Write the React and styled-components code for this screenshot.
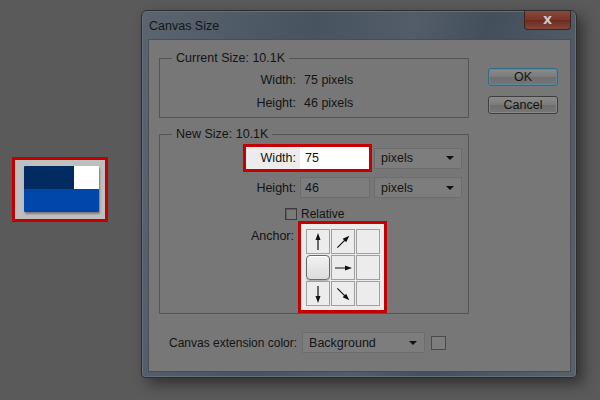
import React from 'react'
import styled, { createGlobalStyle } from 'styled-components'

const GlobalStyle = createGlobalStyle`
    html, body {
        margin: 0;
        padding: 0;
        background: #5a5a5a;
    }
    body {
        font-family: "Liberation Sans", Arial, sans-serif;
        font-size: 12px;
        line-height: 14px;
        color: #141414;
    }
`

const Page = styled.div`
    width: 600px;
    height: 400px;
    display: flex;
    align-items: flex-start;
    gap: 33px;
    padding: 10px 0 0 12px;
    box-sizing: border-box;
    overflow: hidden;
    background: #5a5a5a;
`

const Thumb = styled.div`
    margin-top: 147px;
    width: 96px;
    height: 65px;
    box-sizing: border-box;
    border: 3px solid #c40000;
    background: #bfbfbf;
    padding: 6px 0 0 9px;
`

const ThumbImage = styled.div`
    width: 75px;
    height: 46px;
    display: grid;
    grid-template-columns: 50px 25px;
    grid-template-rows: 23px 23px;
    box-shadow: 1px 2px 2px rgba(0, 0, 0, .35);
    border-radius: 1px;
    overflow: hidden;
`

const Swatch = styled.div`
    background: ${p => p.$color};
    grid-column: ${p => p.$span || 'auto'};
`

const Window = styled.div`
    width: 436px;
    height: 368px;
    box-sizing: border-box;
    border: 1px solid #2b2d30;
    border-radius: 6px 6px 4px 4px;
    background: linear-gradient(100deg, #5a6570 0%, #47535f 35%, #525d69 55%, #434f5b 70%, #58626d 100%);
    box-shadow: 6px 6px 14px rgba(0, 0, 0, .45), inset 0 0 0 1px #66707b;
    padding: 0 5px 5px 6px;
    display: flex;
    flex-direction: column;
`

const TitleBar = styled.div`
    height: 28px;
    display: flex;
    align-items: flex-start;
    justify-content: space-between;
`

const Title = styled.div`
    font-size: 12.5px;
    color: #151515;
    padding-top: 8px;
    padding-left: 1px;
`

const CloseButton = styled.div`
    width: 47px;
    height: 19px;
    box-sizing: border-box;
    border: 1px solid #3a2523;
    border-top: none;
    border-radius: 0 0 4px 4px;
    background: linear-gradient(#8a4a3f, #7a3326 50%, #6c2a1f 51%, #86463a);
    display: flex;
    align-items: center;
    justify-content: center;
    color: #c9c9c9;
    font-family: "DejaVu Sans", sans-serif;
    font-weight: bold;
    font-size: 14px;
    line-height: 1;
    padding-bottom: 2px;
`

const Client = styled.div`
    flex: 1;
    border: 1px solid #474e56;
    background: #777777;
    display: flex;
    padding: 11px 0 0 10px;
`

const LeftColumn = styled.div`
    width: 310px;
    display: flex;
    flex-direction: column;
`

const RightColumn = styled.div`
    margin-left: 19px;
    margin-top: 17px;
    width: 70px;
    display: flex;
    flex-direction: column;
    gap: 10px;
`

const Button = styled.div`
    height: 18px;
    box-sizing: border-box;
    border: 1px solid ${p => (p.$default ? '#2f6c8a' : '#3e3e3e')};
    box-shadow: ${p => (p.$default ? 'inset 0 0 0 1px #5b8aa0' : 'inset 0 0 0 1px #8a8a8a')};
    border-radius: 3px;
    background: linear-gradient(#8b8b8b, #7b7b7b 50%, #6f6f6f 51%, #767676);
    display: flex;
    align-items: center;
    justify-content: center;
    font-size: 12.5px;
`

const Group = styled.fieldset`
    margin: ${p => p.$gap || 0}px 0 0 0;
    padding: ${p => p.$pt}px 0 ${p => p.$pb}px 0;
    border: 1px solid #545454;
    min-width: 0;
`

const Legend = styled.legend`
    margin-left: 12px;
    padding: 0 4px;
    line-height: 14px;
    font-size: 12.5px;
`

const Rows = styled.div`
    display: flex;
    flex-direction: column;
    gap: ${p => p.$gap}px;
`

const Row = styled.div`
    display: flex;
    align-items: ${p => p.$align || 'center'};
    gap: 4px;
    margin-top: ${p => p.$mt || 0}px;
`

const Label = styled.div`
    width: ${p => p.$w}px;
    text-align: right;
    flex-shrink: 0;
    display: flex;
    justify-content: flex-end;
    align-items: center;
    gap: 4px;
    margin-top: ${p => p.$mt || 0}px;
    font-size: 12.5px;
`

const Value = styled.div`
    padding-left: 4px;
    font-size: 12.5px;
`

const Highlight = styled.div`
    margin-left: 83px;
    border: 3px solid #c40000;
    background: #ececec;
    display: flex;
    align-items: center;
    gap: 4px;
`

const Input = styled.div`
    width: ${p => p.$w}px;
    height: ${p => p.$h}px;
    box-sizing: border-box;
    padding-left: 4px;
    display: flex;
    align-items: center;
    background: ${p => (p.$active ? '#ffffff' : '#7d7d7d')};
    border: 1px solid ${p => (p.$active ? '#ffffff' : '#6c6c6c')};
    font-size: 12.5px;
`

const Select = styled.div`
    width: ${p => p.$w}px;
    height: 21px;
    box-sizing: border-box;
    margin-left: ${p => p.$ml || 0}px;
    border: 1px solid #6d6d6d;
    background: #7d7d7d;
    display: flex;
    align-items: center;
    justify-content: space-between;
    padding: 0 7px 0 6px;
    font-size: 12.5px;
`

const Caret = styled.span`
    width: 0;
    height: 0;
    border-left: 4px solid transparent;
    border-right: 4px solid transparent;
    border-top: 4px solid #111;
`

const Checkbox = styled.div`
    width: 12px;
    height: 12px;
    box-sizing: border-box;
    border: 1px solid #3c3c3c;
    background: #7a7a7a;
    box-shadow: inset 1px 1px 0 #5e5e5e;
`

const AnchorBox = styled.div`
    border: 3px solid #c40000;
    background: #ececec;
    padding: 5px 4px 4px 5px;
`

const AnchorGrid = styled.div`
    display: grid;
    grid-template-columns: repeat(3, 24px);
    grid-template-rows: repeat(3, 25px);
    gap: 1px;
`

const Cell = styled.div`
    box-sizing: border-box;
    border: 1px solid #a0a0a0;
    display: flex;
    align-items: center;
    justify-content: center;
    ${p => p.$selected && `
        border: 1px solid #6a6a6a;
        border-radius: 4px;
        background: linear-gradient(#f2f2f2, #dcdcdc);
        box-shadow: inset 0 1px 0 #fff, 0 1px 1px rgba(0,0,0,.25);
    `}
`

const ExtensionRow = styled.div`
    margin-top: 18px;
    padding-left: 10px;
    display: flex;
    align-items: center;
`

const ColorChip = styled.div`
    width: 15px;
    height: 14px;
    box-sizing: border-box;
    margin-left: 6px;
    border: 1px solid #4a4a4a;
    background: #7d7d7d;
`

const Arrow = ({ rotate }) => (
    <svg width="16" height="20" viewBox="0 0 16 20" style={{ transform: `rotate(${rotate}deg)` }}>
        <line x1="8" y1="18" x2="8" y2="6" stroke="#111" strokeWidth="1.2" />
        <polygon points="8,1 5.5,8 10.5,8" fill="#111" />
    </svg>
)

const anchors = [
    { rot: 0 }, { rot: 45 }, {},
    { selected: true }, { rot: 90 }, {},
    { rot: 180 }, { rot: 135 }, {},
]

export default function App() {
    return (
        <>
            <GlobalStyle />
            <Page>
                <Thumb>
                    <ThumbImage>
                        <Swatch $color="#022b62" />
                        <Swatch $color="#ffffff" />
                        <Swatch $color="#0047a9" $span="1 / span 2" />
                    </ThumbImage>
                </Thumb>

                <Window>
                    <TitleBar>
                        <Title>Canvas Size</Title>
                        <CloseButton>x</CloseButton>
                    </TitleBar>

                    <Client>
                        <LeftColumn>
                            <Group $pt={8} $pb={7}>
                                <Legend>Current Size: 10.1K</Legend>
                                <Rows $gap={9}>
                                    <Row>
                                        <Label $w={136}>Width:</Label>
                                        <Value>75 pixels</Value>
                                    </Row>
                                    <Row>
                                        <Label $w={136}>Height:</Label>
                                        <Value>46 pixels</Value>
                                    </Row>
                                </Rows>
                            </Group>

                            <Group $gap={9} $pt={3} $pb={0}>
                                <Legend>New Size: 10.1K</Legend>
                                <Rows $gap={5}>
                                    <Row>
                                        <Highlight>
                                            <Label $w={50}>Width:</Label>
                                            <Input $active $w={69} $h={22}>75</Input>
                                        </Highlight>
                                        <Select $w={88} $ml={-2}>pixels<Caret /></Select>
                                    </Row>
                                    <Row>
                                        <Label $w={136}>Height:</Label>
                                        <Input $w={70} $h={21}>46</Input>
                                        <Select $w={88}>pixels<Caret /></Select>
                                    </Row>
                                    <Row $mt={4}>
                                        <Label $w={137}><Checkbox /></Label>
                                        <span>Relative</span>
                                    </Row>
                                    <Row $align="flex-start" $mt={-5}>
                                        <Label $w={134} $mt={8}>Anchor:</Label>
                                        <AnchorBox>
                                            <AnchorGrid>
                                                {anchors.map((a, i) => (
                                                    <Cell key={i} $selected={a.selected}>
                                                        {a.rot !== undefined && <Arrow rotate={a.rot} />}
                                                    </Cell>
                                                ))}
                                            </AnchorGrid>
                                        </AnchorBox>
                                    </Row>
                                </Rows>
                            </Group>

                            <ExtensionRow>
                                <span>Canvas extension color:</span>
                                <Select $w={123} $ml={5}>Background<Caret /></Select>
                                <ColorChip />
                            </ExtensionRow>
                        </LeftColumn>

                        <RightColumn>
                            <Button $default>OK</Button>
                            <Button>Cancel</Button>
                        </RightColumn>
                    </Client>
                </Window>
            </Page>
        </>
    )
}
